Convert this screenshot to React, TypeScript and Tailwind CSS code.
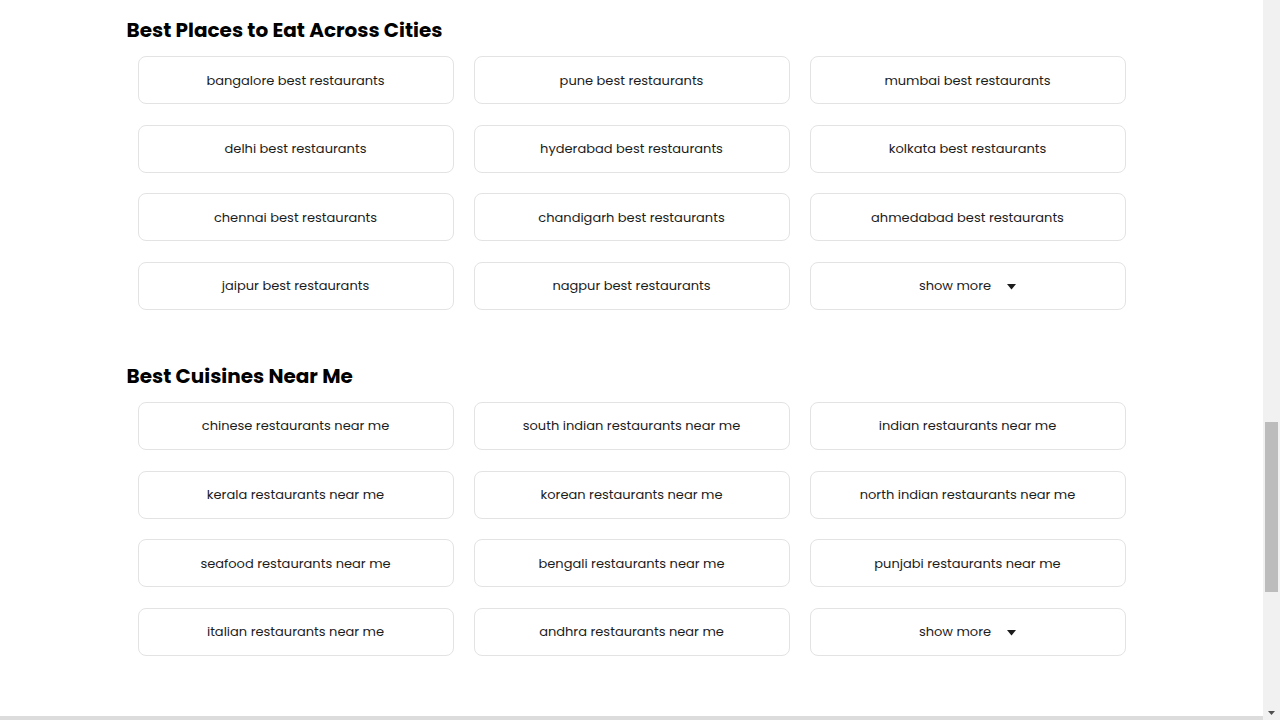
import React from "react";

const cities = [
  "bangalore best restaurants",
  "pune best restaurants",
  "mumbai best restaurants",
  "delhi best restaurants",
  "hyderabad best restaurants",
  "kolkata best restaurants",
  "chennai best restaurants",
  "chandigarh best restaurants",
  "ahmedabad best restaurants",
  "jaipur best restaurants",
  "nagpur best restaurants",
];

const cuisines = [
  "chinese restaurants near me",
  "south indian restaurants near me",
  "indian restaurants near me",
  "kerala restaurants near me",
  "korean restaurants near me",
  "north indian restaurants near me",
  "seafood restaurants near me",
  "bengali restaurants near me",
  "punjabi restaurants near me",
  "italian restaurants near me",
  "andhra restaurants near me",
];

function Card({ children }: { children: React.ReactNode }) {
  return (
    <div className="h-[48px] flex items-center justify-center rounded-[8px] border border-[#e3e3e3] bg-white text-[13px] leading-[20px] pt-[1px] text-[#1c1c1c]">
      {children}
    </div>
  );
}

function Section({ title, items }: { title: string; items: string[] }) {
  return (
    <section>
      <h2 className="text-[20px] leading-[30px] font-bold text-black mb-[11px]">{title}</h2>
      <div className="pl-[11px] pr-[11px] grid grid-cols-3 gap-x-[20px] gap-y-[20.67px]">
        {items.map((t) => (
          <Card key={t}>{t}</Card>
        ))}
        <Card>
          <span className="flex items-center gap-[16px]">
            show more
            <svg width="9" height="6" viewBox="0 0 9 6" className="mt-[1px]">
              <path d="M0 0 L9 0 L4.5 5.5 Z" fill="#1c1c1c" />
            </svg>
          </span>
        </Card>
      </div>
    </section>
  );
}

export default function App() {
  return (
    <div
      className="w-[1280px] h-[720px] flex flex-col bg-white overflow-hidden"
      style={{ fontFamily: '"Poppins", "Open Sans", sans-serif' }}
    >
      <div className="flex flex-1 min-h-0">
        <main className="flex-1 pt-[15px]">
          <div className="w-[1010px] mx-auto flex flex-col gap-[51px]">
            <Section title="Best Places to Eat Across Cities" items={cities} />
            <Section title="Best Cuisines Near Me" items={cuisines} />
          </div>
        </main>
        <div className="w-[17px] bg-[#f1f1f1] flex flex-col">
          <div className="h-[422px]" />
          <div className="mx-[2px] h-[170px] bg-[#bcbcbc]" />
          <div className="flex-1" />
          <div className="flex justify-center pb-[1px]">
            <svg width="7" height="4" viewBox="0 0 7 4">
              <path d="M0 0 L7 0 L3.5 4 Z" fill="#505050" />
            </svg>
          </div>
        </div>
      </div>
      <div className="h-[4px] flex">
        <div className="flex-1 bg-[#dcdcdc]" />
        <div className="w-[17px] bg-[#f1f1f1]" />
      </div>
    </div>
  );
}
